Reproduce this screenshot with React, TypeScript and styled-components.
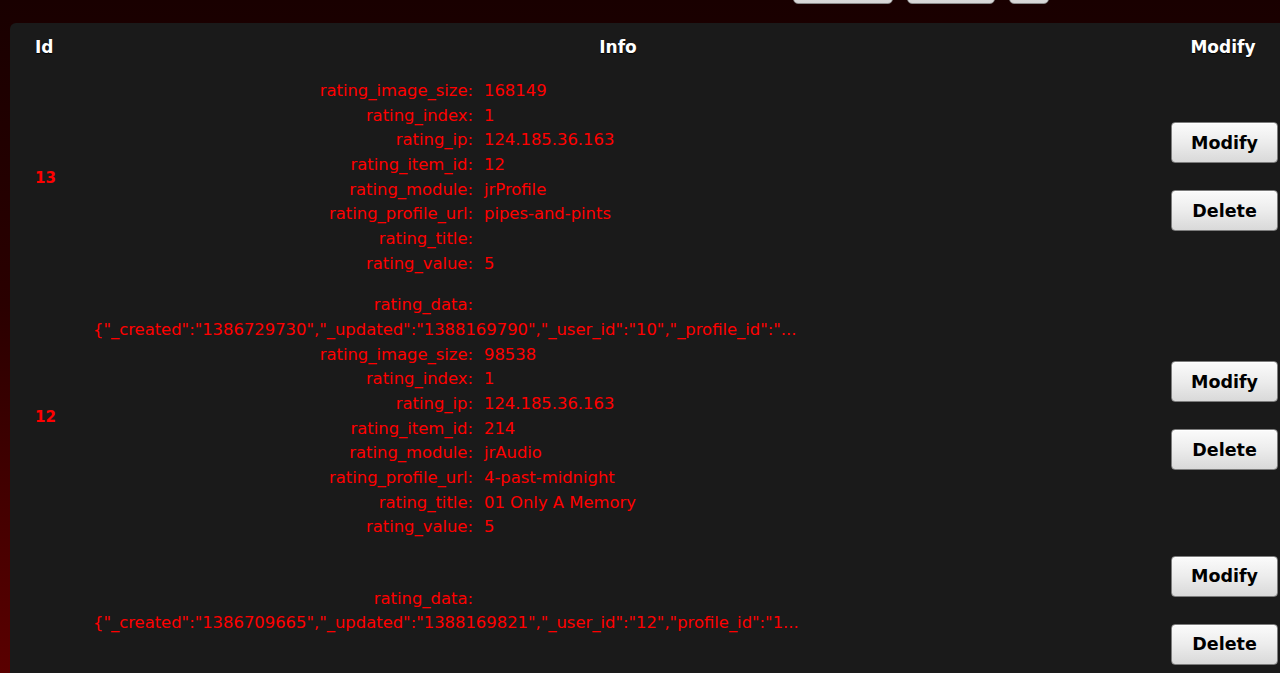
import React from "react";
import styled, { createGlobalStyle } from "styled-components";

type Field = { key: string; value: string; wide?: boolean };
type Item = { id: string; fields: Field[] };

const items: Item[] = [
  {
    id: "13",
    fields: [
      { key: "rating_image_size", value: "168149" },
      { key: "rating_index", value: "1" },
      { key: "rating_ip", value: "124.185.36.163" },
      { key: "rating_item_id", value: "12" },
      { key: "rating_module", value: "jrProfile" },
      { key: "rating_profile_url", value: "pipes-and-pints" },
      { key: "rating_title", value: "" },
      { key: "rating_value", value: "5" },
    ],
  },
  {
    id: "12",
    fields: [
      {
        key: "rating_data",
        value:
          '{"_created":"1386729730","_updated":"1388169790","_user_id":"10","_profile_id":"...',
        wide: true,
      },
      { key: "rating_image_size", value: "98538" },
      { key: "rating_index", value: "1" },
      { key: "rating_ip", value: "124.185.36.163" },
      { key: "rating_item_id", value: "214" },
      { key: "rating_module", value: "jrAudio" },
      { key: "rating_profile_url", value: "4-past-midnight" },
      { key: "rating_title", value: "01 Only A Memory" },
      { key: "rating_value", value: "5" },
    ],
  },
  {
    id: "",
    fields: [
      {
        key: "rating_data",
        value:
          '{"_created":"1386709665","_updated":"1388169821","_user_id":"12","profile_id":"1...',
        wide: true,
      },
    ],
  },
];

const App = (): React.ReactElement => {
  return (
    <>
      <GlobalStyle />
      <Page>
        <TopBar>
          <TopButton $width={100} />
          <TopButton $width={88} />
          <TopButton $width={40} />
        </TopBar>
        <Panel>
          <Grid>
            <HeadCell $align="left">Id</HeadCell>
            <HeadCell $align="center">Info</HeadCell>
            <HeadCell $align="center">Modify</HeadCell>
            {items.map((item, i) => (
              <React.Fragment key={item.id + i}>
                <IdCell>{item.id}</IdCell>
                <InfoCell>
                  {item.fields.map((f) => (
                    <Line key={f.key}>
                      <Key>{f.key}:</Key>
                      {f.wide ? (
                        <WideValue>{f.value}</WideValue>
                      ) : (
                        <Value>{f.value}</Value>
                      )}
                    </Line>
                  ))}
                </InfoCell>
                <ActionCell>
                  <Button>Modify</Button>
                  <Button>Delete</Button>
                </ActionCell>
              </React.Fragment>
            ))}
          </Grid>
        </Panel>
      </Page>
    </>
  );
};

export default App;

const GlobalStyle = createGlobalStyle`
  html, body {
    margin: 0;
    height: 673px;
    overflow: hidden;
  }
  body {
    background: linear-gradient(to bottom, #190000 0%, #2a0000 45%, #5a0000 100%);
    font-family: "DejaVu Sans", Verdana, sans-serif;
  }
`;

const Page = styled.div`
  padding-left: 10px;
`;

const TopBar = styled.div`
  height: 23px;
  display: flex;
  gap: 14px;
  padding-left: 783px;
`;

const TopButton = styled.div<{ $width: number }>`
  width: ${(p) => p.$width}px;
  height: 30px;
  margin-top: -26px;
  border-radius: 5px;
  background: linear-gradient(#f2f2f2, #d6d6d6);
  border: 1px solid #8a8a8a;
  box-sizing: border-box;
`;

const Panel = styled.div`
  width: 1283px;
  min-height: 700px;
  background: #1a1a1a;
  border-radius: 6px 0 0 0;
`;

const Grid = styled.div`
  display: grid;
  grid-template-columns: 73px 1070px 140px;
  align-items: center;
`;

const HeadCell = styled.div<{ $align: string }>`
  padding: 12px 0 11px ${(p) => (p.$align === "left" ? "25px" : "0")};
  text-align: ${(p) => p.$align};
  color: #ffffff;
  font-weight: bold;
  font-size: 17px;
  line-height: 24px;
  text-shadow: 0 1px 1px #000;
`;

const IdCell = styled.div`
  padding: 2px 0 0 25px;
  color: #ff0000;
  font-weight: bold;
  font-size: 15px;
`;

const InfoCell = styled.div`
  padding: 9px 0 8px 10px;
`;

const Line = styled.div`
  color: #ff0000;
  font-size: 16.4px;
  line-height: 24.65px;
  white-space: nowrap;
`;

const Key = styled.span`
  display: inline-block;
  width: 380px;
  text-align: right;
`;

const Value = styled.span`
  margin-left: 11px;
`;

const WideValue = styled.div`
  white-space: nowrap;
`;

const ActionCell = styled.div`
  display: flex;
  flex-direction: column;
  align-items: center;
  gap: 27px;
  padding: 8px 0 9px 3px;
`;

const Button = styled.button`
  width: 107px;
  height: 41px;
  border: 1px solid #7c7c7c;
  border-radius: 4px;
  background: linear-gradient(#fbfbfb 0%, #ececec 50%, #d9d9d9 100%);
  color: #000;
  font-family: "DejaVu Sans", Verdana, sans-serif;
  font-weight: bold;
  font-size: 17.5px;
  padding: 0;
  box-shadow: inset 0 1px 0 #fff;
`;
